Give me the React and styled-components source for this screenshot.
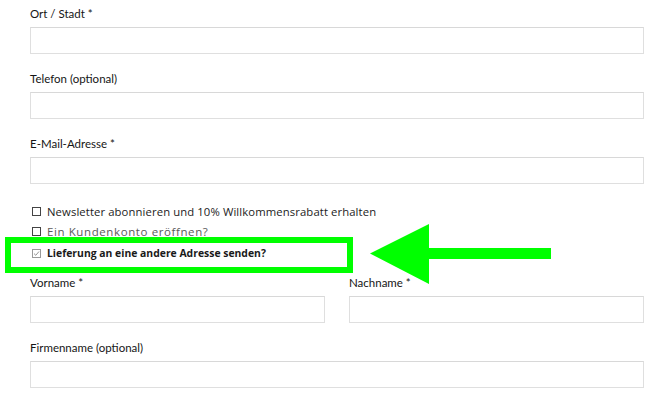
import styled, { createGlobalStyle } from "styled-components";

const GlobalStyle = createGlobalStyle`
  html, body {
    margin: 0;
    padding: 0;
    background: #ffffff;
  }
  * {
    box-sizing: border-box;
  }
`;

const Form = styled.div`
  width: 661px;
  height: 400px;
  overflow: hidden;
  padding: 6px 17px 0 30px;
  display: flex;
  flex-direction: column;
`;

const Field = styled.div`
  display: flex;
  flex-direction: column;
  margin-bottom: 17px;
  flex: ${(p) => (p.$grow ? 1 : "none")};
`;

const Label = styled.label`
  font-family: Lato, "Liberation Sans", sans-serif;
  font-size: 11.5px;
  line-height: 16px;
  color: #151515;
  margin-bottom: 5px;
`;

const Input = styled.div`
  height: 27px;
  border: 1px solid #dfdfdf;
  border-top-color: #d8d8d8;
  background: #ffffff;
`;

const Row = styled.div`
  display: flex;
  gap: 24px;
`;

const Checks = styled.div`
  display: flex;
  flex-direction: column;
  margin-bottom: 10px;
`;

const CheckRow = styled.div`
  position: relative;
  display: flex;
  align-items: center;
  height: ${(p) => p.$h || 22}px;
  padding-left: 2px;
  gap: 6px;
`;

const Box = styled.span`
  width: 9px;
  height: 9px;
  border: 1px solid ${(p) => (p.$checked ? "#9a9a9a" : "#444444")};
  display: flex;
  align-items: center;
  justify-content: center;
  flex-shrink: 0;
`;

const CheckText = styled.span`
  font-family: "Open Sans", "Liberation Sans", sans-serif;
  font-size: ${(p) => p.$size || 11}px;
  font-weight: ${(p) => p.$weight || 400};
  letter-spacing: ${(p) => p.$spacing || 0}px;
  color: ${(p) => p.$color || "#1c1c1c"};
  white-space: nowrap;
`;

const Highlight = styled.div`
  position: absolute;
  left: -25px;
  top: -4px;
  width: 348px;
  height: 36px;
  border: 6px solid #00ff00;
  pointer-events: none;
`;

const Arrow = styled.svg`
  position: absolute;
  left: 340px;
  top: -17px;
  width: 181px;
  height: 60px;
`;

function Check() {
  return (
    <svg width="7" height="7" viewBox="0 0 7 7">
      <path d="M1 3.6 L2.8 5.3 L6 1.5" fill="none" stroke="#8a8a8a" strokeWidth="0.9" />
    </svg>
  );
}

export default function App() {
  return (
    <>
      <GlobalStyle />
      <Form>
        <Field>
          <Label>Ort / Stadt *</Label>
          <Input />
        </Field>
        <Field>
          <Label>Telefon (optional)</Label>
          <Input />
        </Field>
        <Field>
          <Label>E-Mail-Adresse *</Label>
          <Input />
        </Field>

        <Checks>
          <CheckRow $h={21}>
            <Box />
            <CheckText $size={11.3} $spacing={0.1}>
              Newsletter abonnieren und 10% Willkommensrabatt erhalten
            </CheckText>
          </CheckRow>
          <CheckRow $h={19}>
            <Box />
            <CheckText $size={11.5} $spacing={0.6} $color="#5a5a5a">
              Ein Kundenkonto eröffnen?
            </CheckText>
          </CheckRow>
          <CheckRow $h={24}>
            <Box $checked>
              <Check />
            </Box>
            <CheckText $size={10.4} $weight={700} $color="#1a1a1a">
              Lieferung an eine andere Adresse senden?
            </CheckText>
            <Highlight />
            <Arrow viewBox="0 0 181 60">
              <polygon points="0,29.5 59,0 59,24 181,24 181,35 59,35 59,60" fill="#00ff00" />
            </Arrow>
          </CheckRow>
        </Checks>

        <Row>
          <Field $grow>
            <Label>Vorname *</Label>
            <Input />
          </Field>
          <Field $grow>
            <Label>Nachname *</Label>
            <Input />
          </Field>
        </Row>
        <Field>
          <Label>Firmenname (optional)</Label>
          <Input />
        </Field>
      </Form>
    </>
  );
}
